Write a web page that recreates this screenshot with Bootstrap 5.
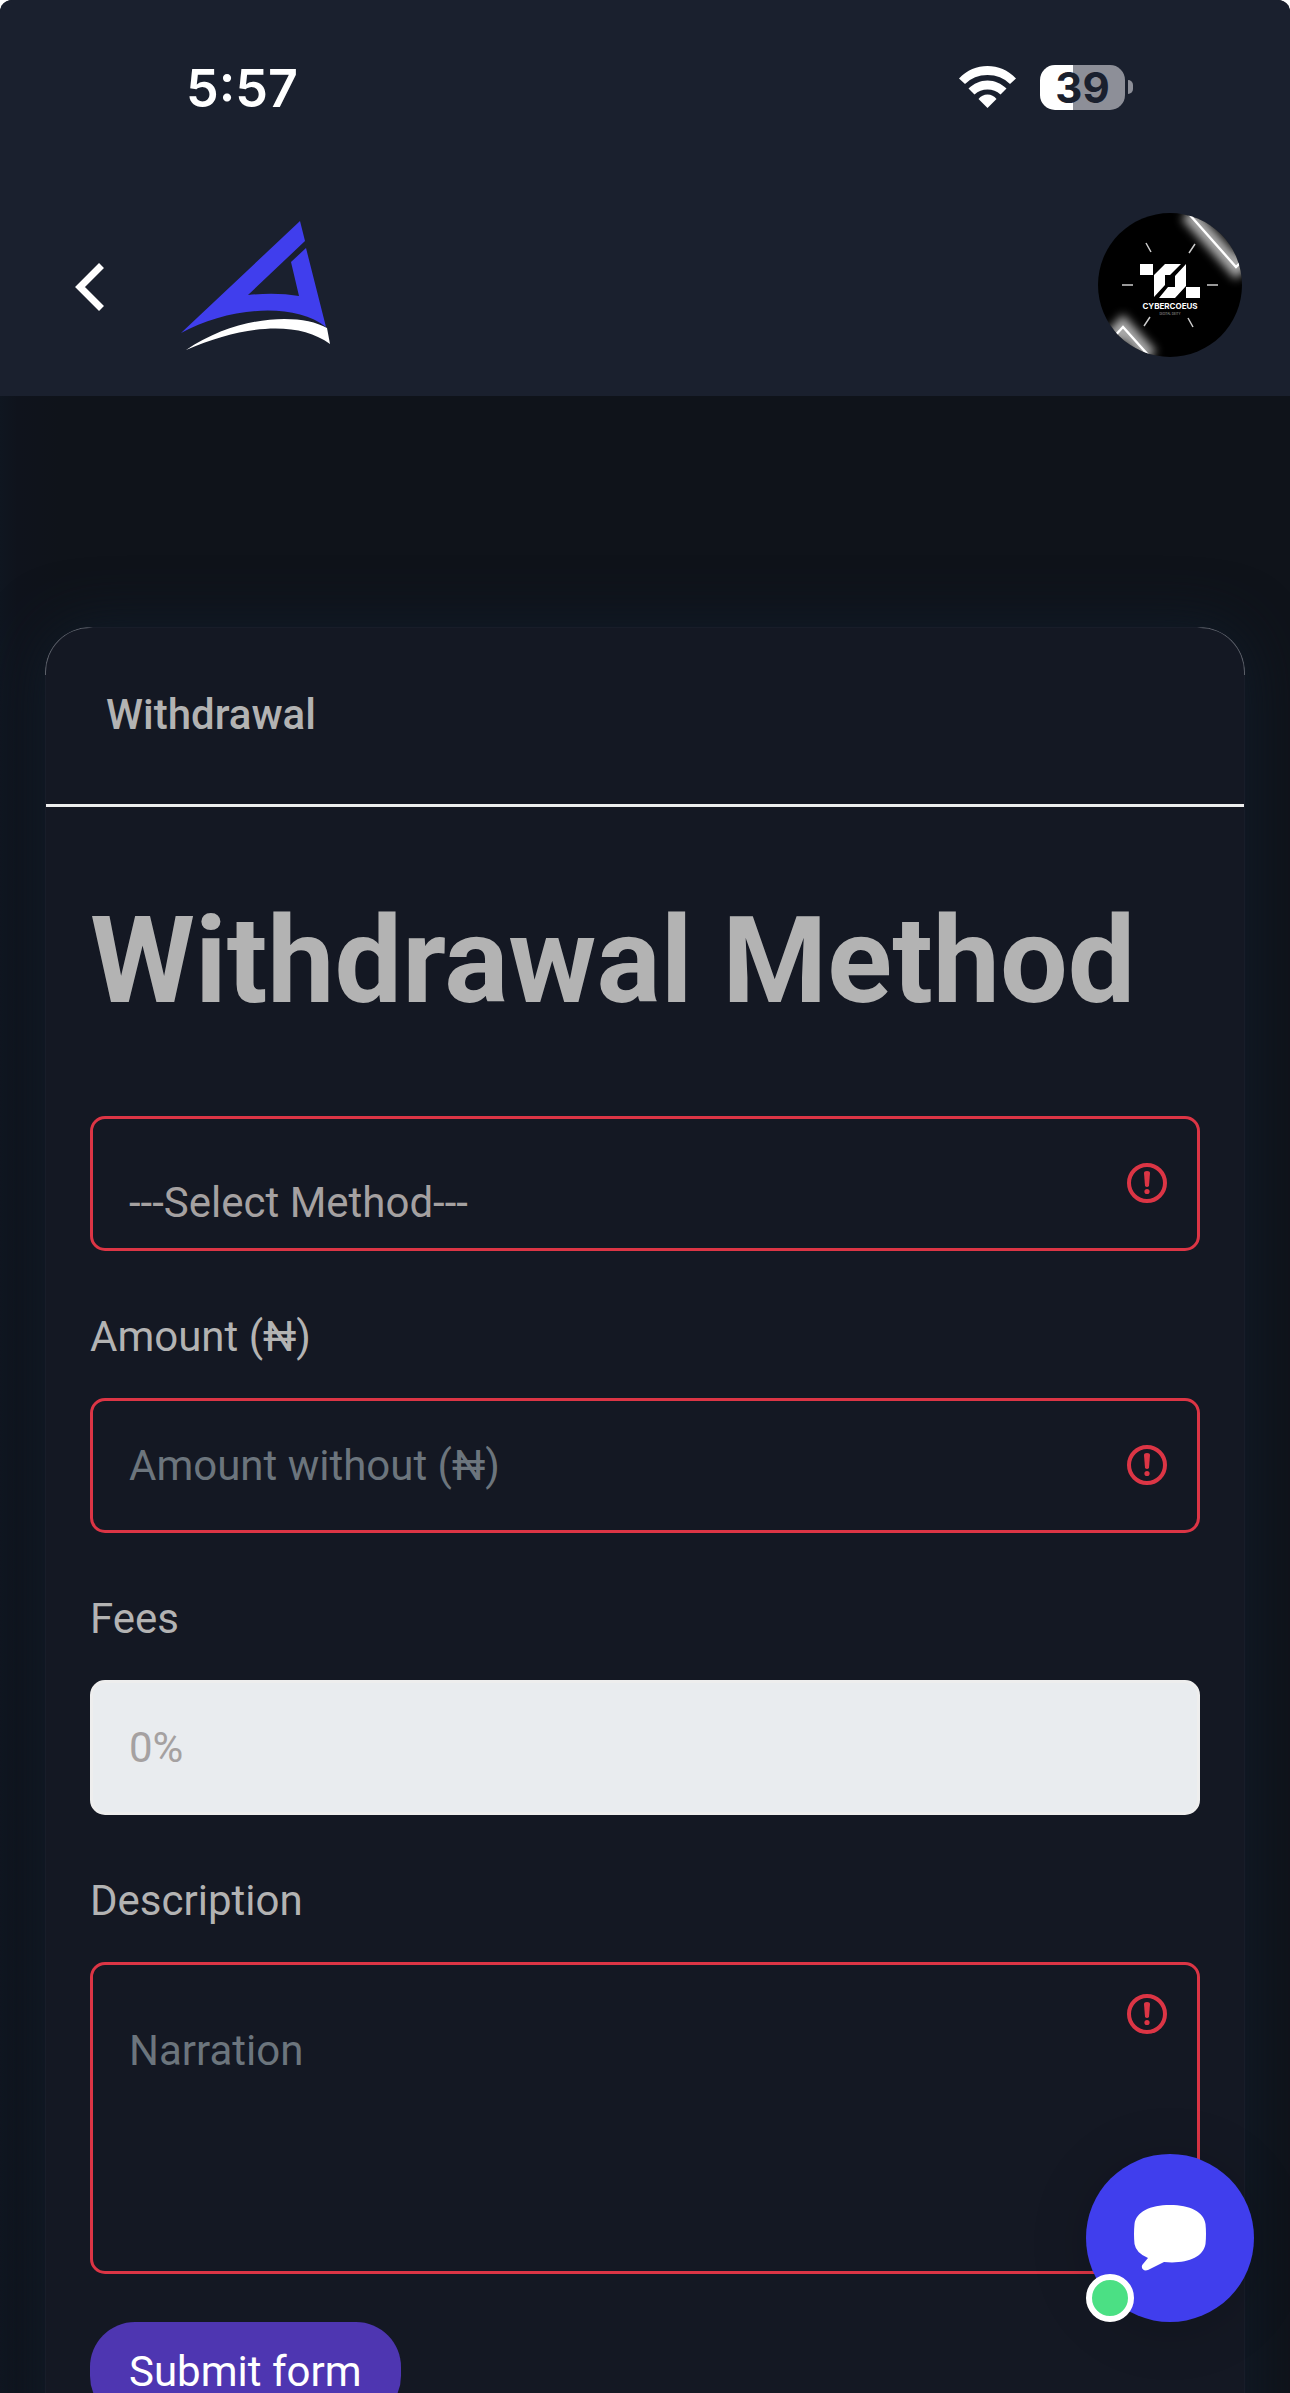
<!DOCTYPE html>
<html lang="en">
<head>
<meta charset="utf-8">
<meta name="viewport" content="width=device-width, initial-scale=1">
<title>Withdrawal</title>
<link rel="stylesheet" href="https://cdn.jsdelivr.net/npm/bootstrap@5.3.0/dist/css/bootstrap.min.css">
<style>
body{background:#fff;font-family:Roboto,"Noto Sans",sans-serif;font-size:42px;line-height:63px;color:#b3b3b3}
.app-shell{background:#0f131a;border-radius:12px 12px 0 0}
.app-header{background:#1a202e;padding:57px 48px 39px 66px}
.status-bar{padding:0 109px 0 120px;height:60px}
.status-time{font:600 52px/60px Inter,sans-serif;color:#fff;padding-top:3px}
.battery{width:85px;height:45px;border-radius:15px;background:linear-gradient(90deg,#fff 39%,#8d8f98 39%);font:700 42px/45px Inter,sans-serif;color:#1a202e}
.battery-tip{width:5px;height:14px;border-radius:0 6px 6px 0;background:#8d8f98;margin-left:3px}
.top-nav{margin-top:96px}
.back-link{width:48px;height:60px;padding-top:4px}
.brand-link{margin-left:67px}
.app-main{padding:231px 45px 0;background:linear-gradient(90deg,#0f1620,#0f131c 18px,#0f131a 60px);scrollbar-width:none}
.app-main::-webkit-scrollbar{display:none}
.panel{--bs-card-bg:#141823;--bs-card-border-color:#181d29;--bs-card-border-radius:45px;--bs-card-color:#b3b3b3;box-shadow:0 0 60px #111d2b}
.panel::before{content:"";position:absolute;inset:-1px -1px auto;height:48px;border:1px solid #5b5f68;border-bottom:0;border-radius:45px 45px 0 0;-webkit-mask:linear-gradient(90deg,#000 42px,transparent 48px,transparent calc(100% - 48px),#000 calc(100% - 42px));mask:linear-gradient(90deg,#000 42px,transparent 48px,transparent calc(100% - 48px),#000 calc(100% - 42px));pointer-events:none}
.panel-head{padding:54px 60px 56px;border-bottom:3px solid #eee;font-size:42px;line-height:66px;font-weight:500}
.panel-body{padding:82px 44px 60px}
.page-title{font-size:120px;line-height:144px;font-weight:700;margin:0 0 83px;color:#b3b3b3}
.field{margin-bottom:54px}
.last-field{margin-bottom:48px}
.field .form-label{margin:0 0 30px;line-height:63px;display:block}
.field .form-control,.field .form-select{font-size:42px;line-height:63px;height:135px;border-width:3px;border-radius:15px;padding:33px 120px 33px 36px;background-color:transparent;color:#a5a1a1}
.field .form-control::placeholder{color:#6c757d;opacity:1}
.field .form-select.is-invalid:not([multiple]){padding:52px 120px 14px 36px;background-image:none}
.field .form-control.is-invalid{background-image:none}
.field textarea.form-control{height:312px;padding-top:54px;resize:none}
.field .form-control:disabled{background:#e9ecef;border-color:#eee;-webkit-text-fill-color:#a5a1a1}
.alert-mark{position:absolute;right:33px;top:47px;width:40px;height:40px;pointer-events:none}
.area-mark{top:32px}
.btn-submit{font-size:42px;line-height:63px;padding:18px 39px;border:0;border-radius:45px;background:#4e36b1;color:#fff}
.chat-btn{position:fixed;right:36px;bottom:71px;width:168px;height:168px;background:#403eed;box-shadow:0 6px 60px rgba(0,0,0,.16)}
.chat-btn svg{width:72px;height:66px}
.online-dot{position:absolute;left:0;bottom:0;width:48px;height:48px;border:6px solid #fff;background:#4be084}
</style>
</head>
<body>
<div class="app-shell d-flex flex-column vh-100 overflow-hidden">
  <header class="app-header">
    <div class="status-bar d-flex align-items-center justify-content-between">
      <span class="status-time">5:57</span>
      <div class="d-flex align-items-center">
        <svg class="me-4" width="57" height="42" viewBox="0 0 57 42" fill="#fff" aria-hidden="true"><path d="M28.500 0C39 0 49 4 57 12.500L51 18Q42 9 28.500 9T6 18L0 12.500C8 4 18 0 28.500 0Z"/><path d="M28.500 14.500C36 14.500 42 17.500 47.500 22.500L41.500 28.500Q36 23.500 28.500 23.500T15.500 28.500L9.500 22.500C15 17.500 21 14.500 28.500 14.500Z"/><path d="M28.500 28.500Q34 28.500 37.500 33L28.500 42 19.500 33Q23 28.500 28.500 28.500Z"/></svg>
        <span class="battery text-center">39</span><span class="battery-tip"></span>
      </div>
    </div>
    <nav class="top-nav d-flex align-items-center">
      <a class="back-link d-flex align-items-center justify-content-center" href="#" aria-label="Back"><svg width="30" height="48" viewBox="0 0 30 48" fill="none" stroke="#fff" stroke-width="7"><path d="M26.500 2.500 5 24l21.500 21.500"/></svg></a>
      <a class="brand-link d-flex" href="#" aria-label="Home"><svg width="149" height="129" viewBox="0 0 149 129"><path fill="#403eed" d="M119 0 124 20 67 74Q95 71 118 75L110 41 125 27 145 106C112 80 45 87 0 112Z"/><path fill="#fff" d="M5 129C55 95 118 91 146 107L149 123C117 99 62 104 5 129Z"/></svg></a>
      <a class="ms-auto d-flex" href="#" aria-label="Profile"><svg width="144" height="144" viewBox="0 0 144 144">
        <defs><clipPath id="disc"><circle cx="72" cy="72" r="72"/></clipPath><filter id="glow" x="-50%" y="-50%" width="200%" height="200%"><feGaussianBlur stdDeviation="5"/></filter></defs>
        <g clip-path="url(#disc)"><rect width="144" height="144"/>
          <g fill="none" stroke="#aaa" stroke-width="17" filter="url(#glow)"><path d="M90 0 138 54 148 44M14 126 25 114 52 144"/></g>
          <g fill="none" stroke="#fff" stroke-width="2.400"><path d="M91 1 138 54 148 44M14 126 25 114 52 144"/></g>
          <path stroke="#ccc" stroke-width="1.500" d="M48 30 53 39M97 31 91 40M24 72H35M109 72H120M52 104 46 113M90 105 95 114"/>
          <g fill="#fff"><path d="M42 51H55V62H42ZM88 74H102V85H88ZM56 62 67 51H83L72 62H67V72L56 84ZM88 51V73L77 85H61L70 74H77V63Z"/></g>
          <text x="72" y="96" fill="#fff" font-family="Inter" font-size="8" font-weight="700" text-anchor="middle">CYBERCOEUS</text>
          <text x="72" y="102" fill="#aaa" font-family="Inter" font-size="3" text-anchor="middle">DIGITAL DEITY</text></g></svg></a>
    </nav>
  </header>

  <main class="app-main flex-grow-1 overflow-auto">
    <section class="card panel">
      <div class="panel-head">Withdrawal</div>
      <form class="panel-body">
        <h1 class="page-title">Withdrawal Method</h1>
        <div class="field position-relative">
          <select class="form-select is-invalid" aria-label="Withdrawal Method"><option>---Select Method---</option></select>
          <svg class="alert-mark" viewBox="0 0 40 40"><use href="#alert"/></svg>
        </div>
        <div class="field">
          <label class="form-label" for="amount">Amount (₦)</label>
          <div class="position-relative"><input class="form-control is-invalid" id="amount" type="text" placeholder="Amount without (₦)"><svg class="alert-mark" viewBox="0 0 40 40"><use href="#alert"/></svg></div>
        </div>
        <div class="field">
          <label class="form-label" for="fees">Fees</label>
          <input class="form-control" id="fees" type="text" value="0%" disabled>
        </div>
        <div class="field last-field">
          <label class="form-label" for="narration">Description</label>
          <div class="position-relative d-flex"><textarea class="form-control is-invalid" id="narration" placeholder="Narration"></textarea><svg class="alert-mark area-mark" viewBox="0 0 40 40"><use href="#alert"/></svg></div>
        </div>
        <button class="btn btn-submit" type="submit">Submit form</button>
      </form>
    </section>
  </main>
  <button class="chat-btn btn rounded-circle p-0 border-0 d-flex align-items-center justify-content-center" type="button" aria-label="Open chat">
    <svg viewBox="0 0 72 66" fill="#fff"><path d="M36 0C56 0 70 7 71.500 19Q72.500 29 71.500 39C69 53 52 59 30 57L14 65C9 67 6 62 9 59L14 53Q2 48 .5 39-.5 29 .5 19C2 7 16 0 36 0Z"/></svg>
    <span class="online-dot rounded-circle"></span>
  </button>
</div>
<svg class="d-none" aria-hidden="true"><symbol id="alert" viewBox="0 0 40 40"><circle cx="20" cy="20" r="18" fill="none" stroke="#dc3545" stroke-width="4"/><path fill="#dc3545" d="M17 10Q17 8 20 8T23 10L22 23Q20 25 18 23Z"/><circle cx="20" cy="28.500" r="2.600" fill="#dc3545"/></symbol></svg>
<script src="https://cdn.jsdelivr.net/npm/bootstrap@5.3.0/dist/js/bootstrap.bundle.min.js"></script>
</body>
</html>
